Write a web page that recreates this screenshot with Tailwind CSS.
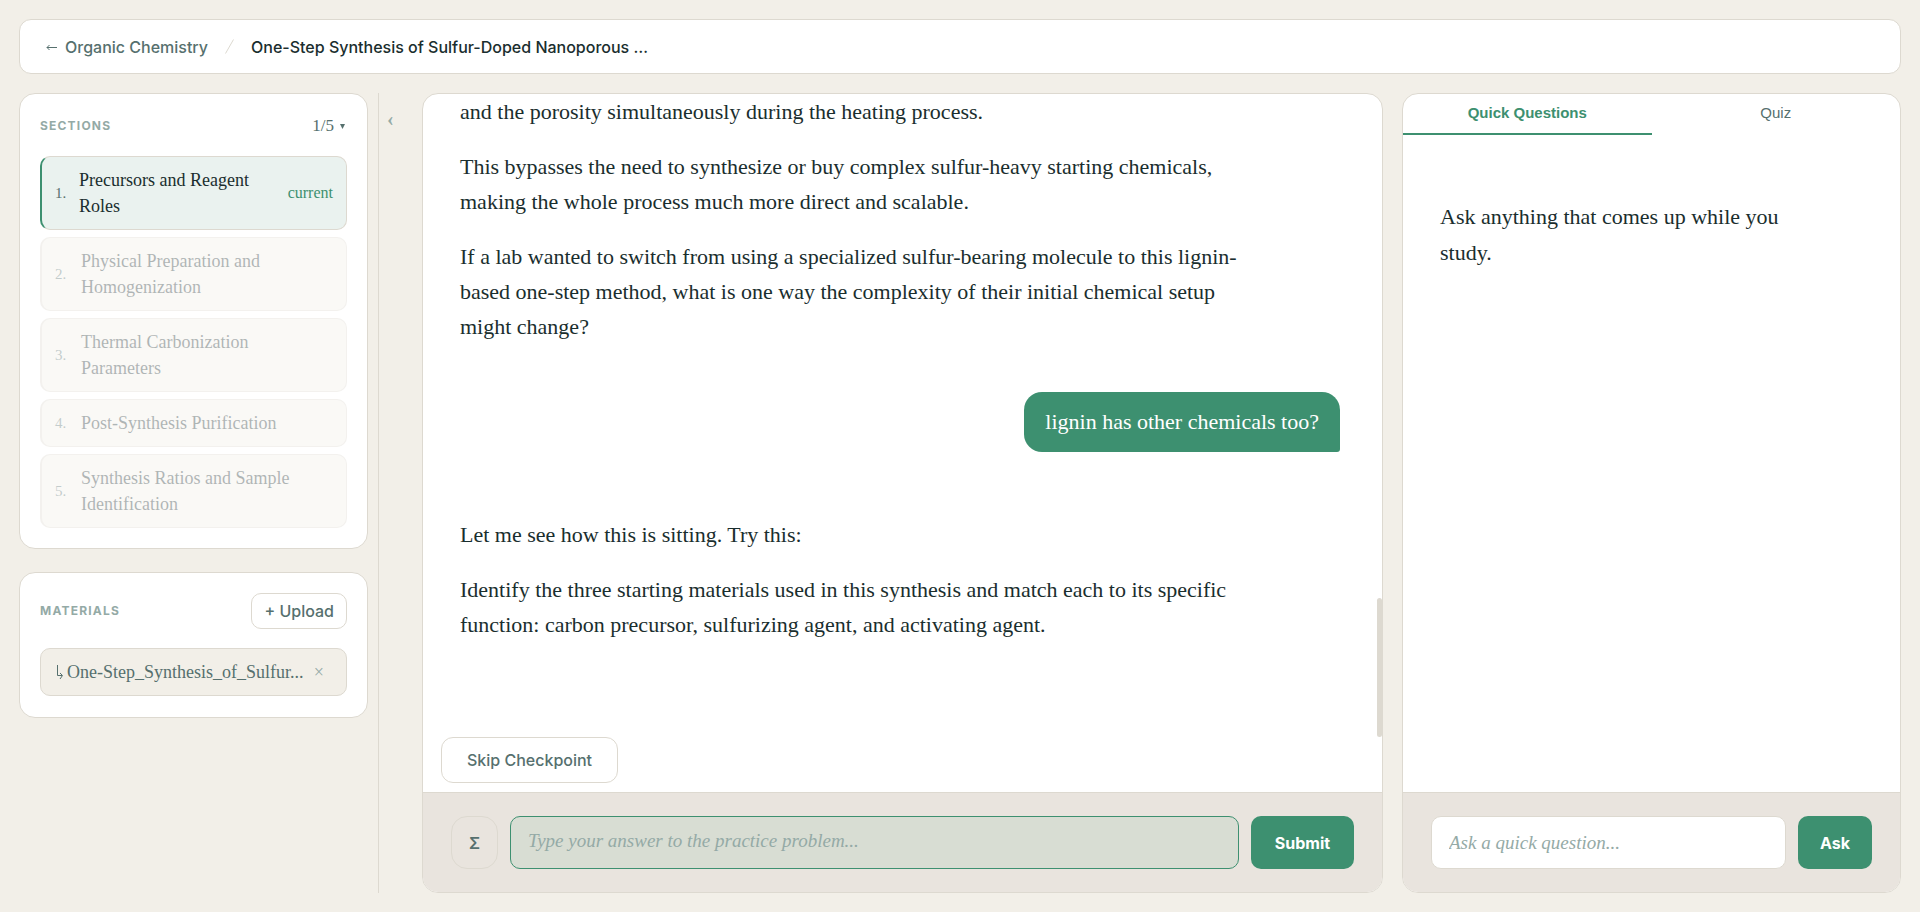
<!DOCTYPE html>
<html lang="en">
<head>
    <meta charset="UTF-8">
    <meta name="viewport" content="width=device-width, initial-scale=1.0">
    <title>One-Step Synthesis of Sulfur-Doped Nanoporous Carbon - Organic Chemistry</title>
    <script src="https://cdn.jsdelivr.net/npm/@tailwindcss/browser@4"></script>
</head>
<body class="bg-[#f2efe8] h-screen flex flex-col gap-[19px] p-[19px] font-['Liberation_Serif',serif] text-[#1a2e2e]">
    <header class="shrink-0 bg-white border border-[#ddd9d0] rounded-xl h-[55px] px-[26px] flex items-center gap-[17px] font-['Inter',sans-serif] font-medium text-base">
        <a href="#" class="flex items-center gap-2 text-[#56706e]">
            <svg class="w-[11px] h-2" viewBox="0 0 11 8" fill="none" stroke="currentColor"><path d="M11 4.5H1M3.5 2L1 4.5L3.5 7"/></svg>
            Organic Chemistry
        </a>
        <svg class="w-[9px] h-[15px] text-[#ddd9d0]" viewBox="0 0 9 15" fill="none" stroke="currentColor"><path d="M8.5 0.5L0.5 14.5"/></svg>
        <h1 class="text-[#1a2e2e]">One-Step Synthesis of Sulfur-Doped Nanoporous …</h1>
    </header>

    <div class="flex-1 min-h-0 flex">
        <aside class="w-[360px] shrink-0 border-r border-[#ddd9d0] pr-[10px] flex flex-col gap-[23px]">
            <!-- Sections -->
            <section class="bg-white border border-[#ddd9d0] rounded-2xl p-5">
                <div class="flex justify-between items-center h-6 mb-[18px]">
                    <h2 class="font-['Inter',sans-serif] font-bold text-xs tracking-widest text-[#94aaa6]">SECTIONS</h2>
                    <button class="flex items-center gap-[6px] pr-[2px] text-[17px] text-[#56706e]">1/5
                        <svg class="w-[5px] h-[5px]" viewBox="0 0 5 5" fill="currentColor"><path d="M0 0h5L2.5 5z"/></svg>
                    </button>
                </div>
                <ol class="flex flex-col gap-[7px] text-lg leading-[26px]">
                    <li class="flex items-center bg-[#eaf2ef] border border-l-2 border-[#ddd9d0] border-l-[#3d9070] rounded-[10px] py-[10px] pl-[13px] pr-[13px]">
                        <span class="w-6 shrink-0 text-[15px] text-[#56706e]">1.</span>
                        <span class="flex-1 pr-5">Precursors and Reagent Roles</span>
                        <span class="text-base text-[#3d9070]">current</span>
                    </li>
                    <li class="flex items-center bg-[#f2efe8] border border-[#ddd9d0] border-l-2 rounded-[10px] py-[10px] pl-[13px] pr-[13px] opacity-35">
                        <span class="w-[26px] shrink-0 text-[15px] text-[#56706e]">2.</span>
                        <span class="pr-16">Physical Preparation and Homogenization</span>
                    </li>
                    <li class="flex items-center bg-[#f2efe8] border border-[#ddd9d0] border-l-2 rounded-[10px] py-[10px] pl-[13px] pr-[13px] opacity-35">
                        <span class="w-[26px] shrink-0 text-[15px] text-[#56706e]">3.</span>
                        <span class="pr-16">Thermal Carbonization Parameters</span>
                    </li>
                    <li class="flex items-center bg-[#f2efe8] border border-[#ddd9d0] border-l-2 rounded-[10px] py-[10px] pl-[13px] pr-[13px] opacity-35">
                        <span class="w-[26px] shrink-0 text-[15px] text-[#56706e]">4.</span>
                        <span>Post-Synthesis Purification</span>
                    </li>
                    <li class="flex items-center bg-[#f2efe8] border border-[#ddd9d0] border-l-2 rounded-[10px] py-[10px] pl-[13px] pr-[13px] opacity-35">
                        <span class="w-[26px] shrink-0 text-[15px] text-[#56706e]">5.</span>
                        <span>Synthesis Ratios and Sample Identification</span>
                    </li>
                </ol>
            </section>

            <!-- Materials -->
            <section class="bg-white border border-[#ddd9d0] rounded-2xl p-[21px] pt-5 pl-5 pr-5">
                <div class="flex justify-between items-center mb-[19px]">
                    <h2 class="font-['Inter',sans-serif] font-bold text-xs tracking-widest text-[#94aaa6]">MATERIALS</h2>
                    <button class="h-9 px-3 border border-[#ddd9d0] rounded-[10px] font-['Inter',sans-serif] font-medium text-base text-[#56706e]">+ Upload</button>
                </div>
                <div class="h-12 flex items-center bg-[#f2efe8] border border-[#ddd9d0] rounded-[10px] pl-[15px] pr-[22px] text-lg text-[#56706e]">
                    <a href="#" class="flex-1 min-w-0 flex items-center gap-1">
                        <svg class="w-[7px] h-4 shrink-0" viewBox="0 0 7 16" fill="none" stroke="currentColor"><path d="M1.5 1v10.5H6M4 9l2.5 2.5L4 15"/></svg>
                        <span class="truncate">One-Step_Synthesis_of_Sulfur...</span>
                    </a>
                    <button aria-label="Remove" class="text-[#94aaa6]">×</button>
                </div>
            </section>
        </aside>

        <button aria-label="Collapse sidebar" class="w-[43px] shrink-0 self-start pt-3 pl-2 text-left text-xl font-bold text-[#94aaa6]">‹</button>

        <main class="flex-1 min-w-0 relative bg-white border border-[#ddd9d0] rounded-2xl flex flex-col overflow-hidden">
            <div class="flex-1 min-h-0 overflow-hidden pl-[37px] pr-[42px] text-[22px] leading-[35px]">
                <div class="max-w-[800px] flex flex-col gap-5">
                    <p>and the porosity simultaneously during the heating process.</p>
                    <p>This bypasses the need to synthesize or buy complex sulfur-heavy starting chemicals,<br>making the whole process much more direct and scalable.</p>
                    <p>If a lab wanted to switch from using a specialized sulfur-bearing molecule to this lignin-<br>based one-step method, what is one way the complexity of their initial chemical setup<br>might change?</p>
                </div>
                <div class="flex justify-end mt-12">
                    <p class="bg-[#3d9070] text-white rounded-[18px] rounded-br-[3px] px-[21px] h-[60px] leading-[60px]">lignin has other chemicals too?</p>
                </div>
                <div class="max-w-[800px] flex flex-col gap-5 mt-[65px]">
                    <p>Let me see how this is sitting. Try this:</p>
                    <p>Identify the three starting materials used in this synthesis and match each to its specific<br>function: carbon precursor, sulfurizing agent, and activating agent.</p>
                </div>
            </div>
            <!-- scrollbar thumb -->
            <div class="absolute right-0 bottom-[155px] w-[5px] h-[139px] rounded-full bg-[#ddd9d0]"></div>
            <div class="px-[18px] pb-[9px]">
                <button class="h-[46px] px-[25px] border border-[#ddd9d0] rounded-xl font-['Inter',sans-serif] font-medium text-base text-[#56706e]">Skip Checkpoint</button>
            </div>
            <form class="bg-[#e9e4de] border-t border-[#ddd9d0] px-7 py-[23px] flex">
                <button type="button" aria-label="Insert symbol" class="w-[47px] h-[53px] mr-3 border border-[#ddd9d0] rounded-2xl font-['Inter',sans-serif] font-semibold text-base text-[#56706e]">Σ</button>
                <textarea rows="1" aria-label="Answer" placeholder="Type your answer to the practice problem..." class="flex-1 min-w-0 h-[53px] mr-3 bg-[#d8ddd3] border border-[#3d9070] rounded-[10px] px-[17px] py-2 text-[19px] leading-8 resize-none outline-none placeholder:italic placeholder:text-[#94aaa6]"></textarea>
                <button type="button" class="w-[103px] h-[53px] bg-[#3d9070] text-white rounded-[10px] font-['Inter',sans-serif] font-bold text-base">Submit</button>
            </form>
        </main>

        <section class="w-[499px] ml-[19px] shrink-0 bg-white border border-[#ddd9d0] rounded-2xl flex flex-col overflow-hidden">
            <div role="tablist" class="grid grid-cols-2 font-['Liberation_Sans',sans-serif] text-[15px]">
                <button role="tab" aria-selected="true" class="h-[41px] border-b-2 border-[#3d9070] font-bold text-[#3d9070]">Quick Questions</button>
                <button role="tab" aria-selected="false" class="h-[41px] border-b-2 border-transparent text-[#56706e]">Quiz</button>
            </div>
            <div class="flex-1 px-[37px] pt-16 text-[22px] leading-9">
                <p class="max-w-[360px]">Ask anything that comes up while you study.</p>
            </div>
            <form class="bg-[#e9e4de] border-t border-[#ddd9d0] px-7 py-[23px] flex gap-3">
                <input type="text" aria-label="Quick question" placeholder="Ask a quick question..." class="flex-1 min-w-0 h-[53px] bg-white border border-[#ddd9d0] rounded-[10px] px-[17px] text-[19px] outline-none placeholder:italic placeholder:text-[#94aaa6]">
                <button type="button" class="w-[74px] h-[53px] bg-[#3d9070] text-white rounded-[10px] font-['Inter',sans-serif] font-bold text-base">Ask</button>
            </form>
        </section>
    </div>
</body>
</html>
